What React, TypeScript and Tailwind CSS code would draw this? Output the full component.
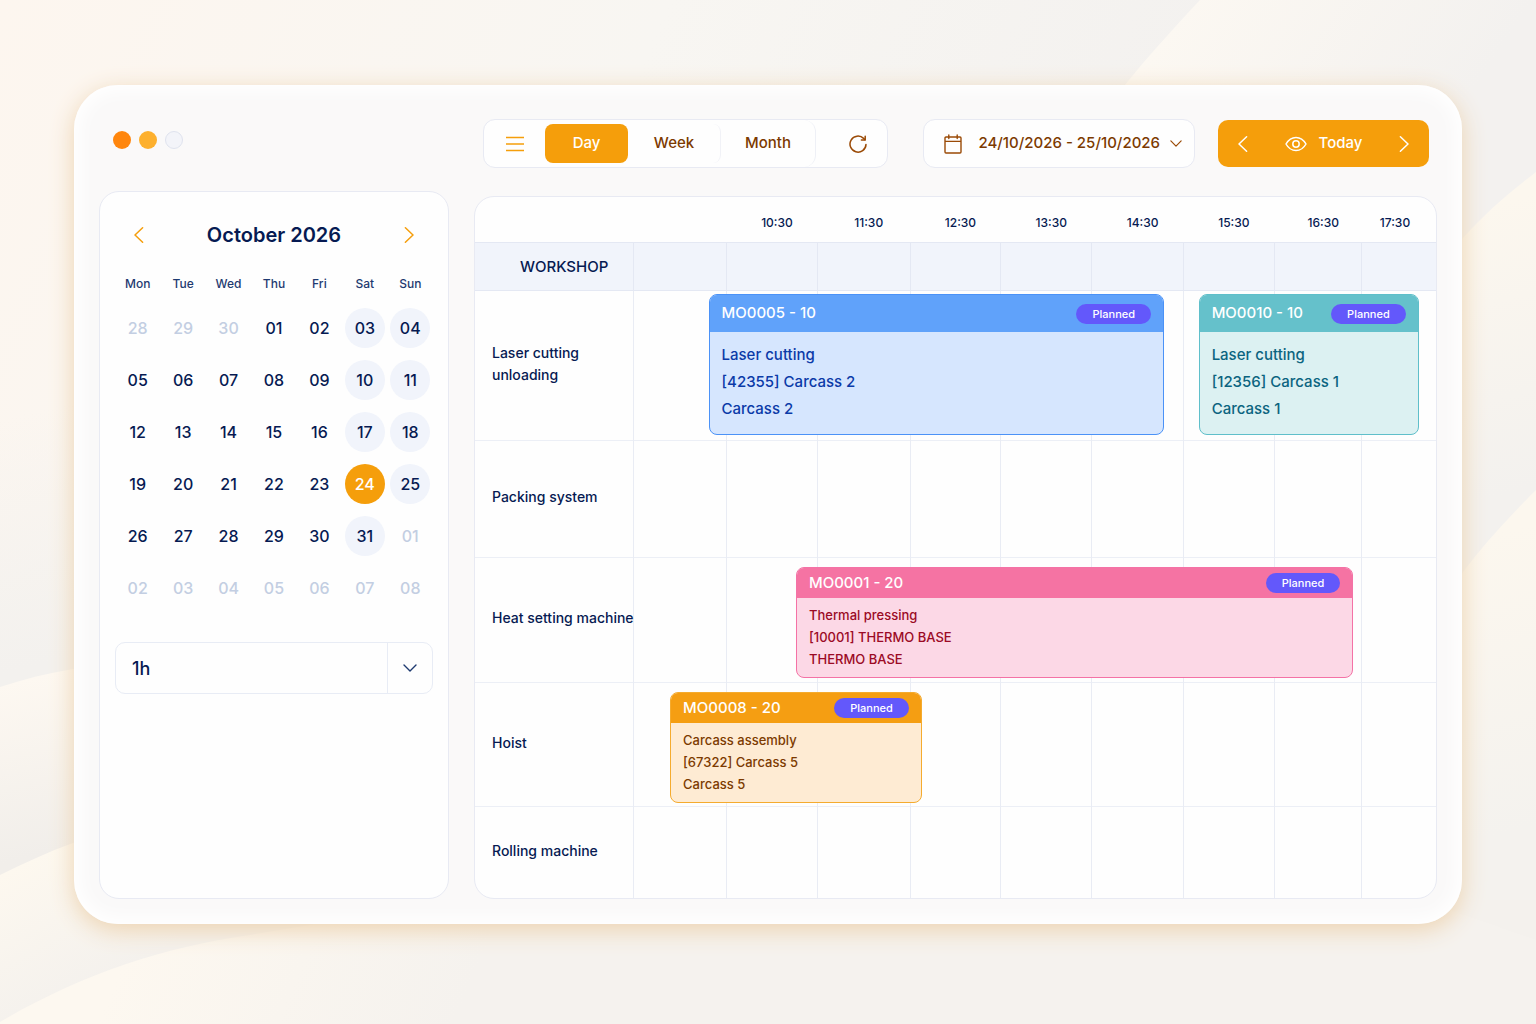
import React, { useState } from "react";

type IconProps = { className?: string };

const ChevronLeft = ({ className }: IconProps) => (
  <svg viewBox="0 0 10 16" fill="none" stroke="currentColor" strokeLinecap="round" strokeLinejoin="round" className={className} aria-hidden="true">
    <path d="M8.6 0.8 1 8l7.6 7.2" strokeWidth="1.5" />
  </svg>
);

const ChevronRight = ({ className }: IconProps) => (
  <svg viewBox="0 0 10 16" fill="none" stroke="currentColor" strokeLinecap="round" strokeLinejoin="round" className={className} aria-hidden="true">
    <path d="M1.4 0.8 9 8l-7.6 7.2" strokeWidth="1.5" />
  </svg>
);

const ChevronDown = ({ className }: IconProps) => (
  <svg viewBox="0 0 14 8" fill="none" stroke="currentColor" strokeLinecap="round" strokeLinejoin="round" className={className} aria-hidden="true">
    <path d="M1 1l6 6 6-6" strokeWidth="1.4" />
  </svg>
);

const MenuIcon = ({ className }: IconProps) => (
  <svg viewBox="0 0 18 16" fill="none" stroke="currentColor" className={className} aria-hidden="true">
    <path d="M0 1.5h18M0 8h18M0 14.5h18" strokeWidth="1.5" />
  </svg>
);

const RefreshIcon = ({ className }: IconProps) => (
  <svg viewBox="0 0 18 18" fill="none" stroke="currentColor" strokeLinecap="round" strokeLinejoin="round" className={className} aria-hidden="true">
    <path d="M17 9.4A8 8 0 1 1 14.6 3.4L16 4.8" strokeWidth="1.5" />
    <path d="M16.2 1.2v3.8h-3.8" strokeWidth="1.5" />
  </svg>
);

const CalendarIcon = ({ className }: IconProps) => (
  <svg viewBox="0 0 18 20" fill="none" stroke="currentColor" strokeLinecap="round" strokeLinejoin="round" className={className} aria-hidden="true">
    <path d="M2 3h14a1 1 0 0 1 1 1v14a1 1 0 0 1-1 1H2a1 1 0 0 1-1-1V4a1 1 0 0 1 1-1ZM1 7.4h16M4.8 1v3.6M13.2 1v3.6" strokeWidth="1.4" />
  </svg>
);

const EyeIcon = ({ className }: IconProps) => (
  <svg viewBox="0 0 22 16" fill="none" stroke="currentColor" strokeLinejoin="round" className={className} aria-hidden="true">
    <path d="M1 8c2.4-4.2 6-6.6 10-6.6S18.6 3.8 21 8c-2.4 4.2-6 6.6-10 6.6S3.4 12.2 1 8Z" strokeWidth="1.5" />
    <circle cx="11" cy="8" r="3.2" strokeWidth="1.5" />
  </svg>
);

const weekdays = ["Mon", "Tue", "Wed", "Thu", "Fri", "Sat", "Sun"];

const weeks = [
  ["28", "29", "30", "01", "02", "03", "04"],
  ["05", "06", "07", "08", "09", "10", "11"],
  ["12", "13", "14", "15", "16", "17", "18"],
  ["19", "20", "21", "22", "23", "24", "25"],
  ["26", "27", "28", "29", "30", "31", "01"],
  ["02", "03", "04", "05", "06", "07", "08"],
];

const isOutside = (week: number, day: number) =>
  (week === 0 && day < 3) || (week === 4 && day === 6) || week === 5;

const dayClass = (week: number, day: number, selected: boolean) => {
  if (selected) return "bg-[#f59e0b] text-white";
  if (isOutside(week, day)) return "text-[#c3cee2]";
  if (day > 4) return "bg-[#f1f4fb] text-[#061a52]";
  return "text-[#061a52]";
};

const Calendar = () => {
  const [selected, setSelected] = useState("3-5");

  return (
    <aside className="flex-1 rounded-[20px] border border-[#e8eaf3] bg-[#fefefe] px-[15px] pt-[27px]">
      <div className="flex items-center justify-between px-4">
        <button aria-label="Previous month" className="flex h-8 w-4 items-center justify-center text-[#f59e0b]">
          <ChevronLeft className="h-4 w-[10px]" />
        </button>
        <h2 className="text-[20px] leading-8 font-semibold text-[#061a52]">October 2026</h2>
        <button aria-label="Next month" className="flex h-8 w-4 items-center justify-center text-[#f59e0b]">
          <ChevronRight className="h-4 w-[10px]" />
        </button>
      </div>

      <table className="mt-[15px] w-full table-fixed text-center">
        <thead>
          <tr className="h-9 text-[12px] text-[#1e3a70]">
            {weekdays.map((name) => (
              <th key={name} scope="col" className="font-medium">
                {name}
              </th>
            ))}
          </tr>
        </thead>
        <tbody>
          {weeks.map((week, w) => (
            <tr key={w} className="h-[52px]">
              {week.map((day, d) => (
                <td key={d} className="p-0">
                  <button
                    onClick={() => setSelected(`${w}-${d}`)}
                    className={`size-10 rounded-full align-middle text-[16px] font-medium ${dayClass(w, d, selected === `${w}-${d}`)}`}
                  >
                    {day}
                  </button>
                </td>
              ))}
            </tr>
          ))}
        </tbody>
      </table>

      <div className="relative mt-7">
        <select
          aria-label="Time step"
          className="h-[52px] w-full appearance-none rounded-[10px] border border-[#e8ecf5] bg-transparent px-4 text-[18px] font-medium text-[#061a52]"
        >
          <option>1h</option>
          <option>2h</option>
          <option>4h</option>
        </select>
        <span className="pointer-events-none absolute inset-y-px right-px flex w-[45px] items-center justify-center border-l border-[#e8ecf5] text-[#1e3a70]">
          <ChevronDown className="h-2 w-[14px]" />
        </span>
      </div>
    </aside>
  );
};

const Toolbar = () => {
  const [view, setView] = useState("Day");

  const tab = (name: string) =>
    view === name ? "bg-[#f59e0b] text-white" : "text-[#7c3a00]";

  return (
    <div className="flex items-center pr-2 pl-[9px] text-[15px] font-medium text-[#7c3a00]">
      <div className="flex h-[49px] items-center rounded-xl border border-[#e8eaf3] bg-[#fefefe]">
        <button aria-label="Menu" className="flex h-full w-[61px] items-center justify-center text-[#f59e0b]">
          <MenuIcon className="h-4 w-[18px]" />
        </button>
        <button onClick={() => setView("Day")} className={`h-[39px] w-[83px] rounded-lg ${tab("Day")}`}>
          Day
        </button>
        <div className="h-[39px] w-[93px] rounded-r-lg border-r border-[#f1f2f7]">
          <button onClick={() => setView("Week")} className={`size-full rounded-lg ${tab("Week")}`}>
            Week
          </button>
        </div>
        <div className="h-full w-[95px] rounded-r-xl border-r border-[#eef0f6]">
          <button onClick={() => setView("Month")} className={`size-full rounded-lg ${tab("Month")}`}>
            Month
          </button>
        </div>
        <button aria-label="Refresh" className="flex h-full w-[71px] items-center justify-center pl-3 text-[#9a4a06]">
          <RefreshIcon className="size-[18px]" />
        </button>
      </div>

      <button className="ml-auto flex h-[49px] items-center rounded-xl border border-[#e8eaf3] bg-[#fefefe] pr-3 pl-5">
        <CalendarIcon className="h-5 w-[18px] text-[#9a4a06]" />
        <span className="mr-[10px] ml-4">24/10/2026 - 25/10/2026</span>
        <ChevronDown className="h-[7px] w-3 text-[#9a4a06]" />
      </button>

      <div className="ml-[23px] flex h-[47px] w-[211px] items-center justify-between rounded-[10px] bg-[#f59e0b] px-5 text-white">
        <button aria-label="Previous day">
          <ChevronLeft className="h-4 w-[10px]" />
        </button>
        <button className="flex items-center gap-3">
          <EyeIcon className="h-4 w-[22px]" />
          Today
        </button>
        <button aria-label="Next day">
          <ChevronRight className="h-4 w-[10px]" />
        </button>
      </div>
    </div>
  );
};

type Order = {
  code: string;
  lines: string[];
  // position on the row, in percent of the table width
  left: number;
  width: number;
  compact?: boolean;
  box: string;
  head: string;
};

const columns = [
  "w-[9.7%]",
  "w-[9.4%]",
  "w-[9.7%]",
  "w-[9.4%]",
  "w-[9.5%]",
  "w-[9.5%]",
  "w-[9.5%]",
  "w-[9.1%]",
  "w-[7.7%]",
];

const hours = ["", "10:30", "11:30", "12:30", "13:30", "14:30", "15:30", "16:30", "17:30"];

const rows: { name: string; height: string; orders: Order[] }[] = [
  {
    name: "Laser cutting\nunloading",
    height: "h-[150px]",
    orders: [
      {
        code: "MO0005 - 10",
        lines: ["Laser cutting", "[42355] Carcass 2", "Carcass 2"],
        left: 24.3,
        width: 47.4,
        box: "border-[#4b92f7] bg-[#d6e6fe] text-[#0b3aa8]",
        head: "bg-[#60a2fa]",
      },
      {
        code: "MO0010 - 10",
        lines: ["Laser cutting", "[12356] Carcass 1", "Carcass 1"],
        left: 75.3,
        width: 22.9,
        box: "border-[#5fbfca] bg-[#dcf1f2] text-[#0b6480]",
        head: "bg-[#65c1cb]",
      },
    ],
  },
  { name: "Packing system", height: "h-[117px]", orders: [] },
  {
    name: "Heat setting machine",
    height: "h-[125px]",
    orders: [
      {
        code: "MO0001 - 20",
        lines: ["Thermal pressing", "[10001] THERMO BASE", "THERMO BASE"],
        left: 33.4,
        width: 58,
        compact: true,
        box: "border-[#f472a6] bg-[#fcd8e6] text-[#9b0a25]",
        head: "bg-[#f573a3]",
      },
    ],
  },
  {
    name: "Hoist",
    height: "h-[124px]",
    orders: [
      {
        code: "MO0008 - 20",
        lines: ["Carcass assembly", "[67322] Carcass 5", "Carcass 5"],
        left: 20.3,
        width: 26.2,
        compact: true,
        box: "border-[#f5ab2e] bg-[#feebd3] text-[#7c3a00]",
        head: "bg-[#f59e12]",
      },
    ],
  },
  { name: "Rolling machine", height: "h-[92px]", orders: [] },
];

const OrderCard = ({ order }: { order: Order }) => (
  <article
    style={{ left: `${order.left}%`, width: `${order.width}%` }}
    className={`absolute overflow-hidden rounded-lg border font-medium ${order.compact ? "top-[10px]" : "top-1"} ${order.box}`}
  >
    <header className={`flex items-center justify-between px-3 text-[15px] text-white ${order.compact ? "h-[30px]" : "h-[37px]"} ${order.head}`}>
      <span>{order.code}</span>
      <span className="rounded-full bg-[#6358fb] px-4 text-[11px] leading-5">Planned</span>
    </header>
    <div className={order.compact ? "px-3 pt-[6px] pb-[7px] text-[13px] leading-[22px]" : "px-3 pt-[9px] pb-3 text-[15px] leading-[27px]"}>
      {order.lines.map((line) => (
        <p key={line}>{line}</p>
      ))}
    </div>
  </article>
);

const Scheduler = () => (
  <div className="overflow-hidden rounded-[20px] border border-[#e8eaf3] bg-[#fefefe]">
    <table className="w-full table-fixed text-left text-[#061a52]">
      <colgroup>
        <col className="w-[16.5%]" />
        {columns.map((width, i) => (
          <col key={i} className={width} />
        ))}
      </colgroup>
      <thead>
        <tr className="h-[45px] text-[12px]">
          <td />
          {hours.map((hour, i) => (
            <th key={i} scope="col" className={`pt-[7px] text-center font-medium ${i === 8 ? "pr-2" : "pl-[10px]"}`}>
              {hour}
            </th>
          ))}
        </tr>
        <tr className="h-12 border-y border-[#e4e8f3] bg-[#f1f4fb]">
          <th scope="col" className="pt-[3px] pl-[45px] text-[15px] font-medium">
            WORKSHOP
          </th>
          {hours.map((_, i) => (
            <td key={i} className="border-l border-[#e4e8f3]" />
          ))}
        </tr>
      </thead>
      <tbody>
        {rows.map((row) => (
          <tr key={row.name} className={`relative border-b border-[#eceff6] last:border-b-0 ${row.height}`}>
            <th scope="row" className="pr-0 pb-[3px] pl-[17px] text-[14px] leading-[22px] font-medium whitespace-pre">
              {row.name}
            </th>
            {hours.map((_, i) => (
              <td key={i} className="border-l border-[#e9ecf4] p-0">
                {i === 0 && row.orders.map((order) => <OrderCard key={order.code} order={order} />)}
              </td>
            ))}
          </tr>
        ))}
      </tbody>
    </table>
  </div>
);

const Backdrop = () => (
  <svg viewBox="0 0 1536 1024" preserveAspectRatio="none" className="absolute inset-0 -z-10 size-full" aria-hidden="true">
    <defs>
      <linearGradient id="base" x1="0" y1="0" x2="1" y2="0.3">
        <stop offset="0" stopColor="#fdf6ef" />
        <stop offset="0.4" stopColor="#f8f6f2" />
        <stop offset="0.75" stopColor="#f3f1ef" />
      </linearGradient>
      <linearGradient id="left" gradientUnits="userSpaceOnUse" x1="0" y1="420" x2="60" y2="660">
        <stop offset="0" stopColor="#f3f1ee" stopOpacity="0" />
        <stop offset="1" stopColor="#f3f1ee" />
      </linearGradient>
      <linearGradient id="topRight" gradientUnits="userSpaceOnUse" x1="1160" y1="40" x2="1400" y2="200">
        <stop offset="0" stopColor="#fcf8f2" />
        <stop offset="1" stopColor="#f3f1ef" />
      </linearGradient>
      <linearGradient id="right" gradientUnits="userSpaceOnUse" x1="1490" y1="205" x2="1560" y2="480">
        <stop offset="0" stopColor="#fcf7ee" />
        <stop offset="1" stopColor="#f3f1ee" />
      </linearGradient>
      <linearGradient id="lowRight" gradientUnits="userSpaceOnUse" x1="1490" y1="535" x2="1560" y2="820">
        <stop offset="0" stopColor="#fcf7ee" />
        <stop offset="1" stopColor="#f4f2ee" />
      </linearGradient>
      <linearGradient id="leftWave" gradientUnits="userSpaceOnUse" x1="20" y1="680" x2="60" y2="850">
        <stop offset="0" stopColor="#fdf8f1" />
        <stop offset="1" stopColor="#f1eeea" />
      </linearGradient>
      <linearGradient id="lowLeft" gradientUnits="userSpaceOnUse" x1="20" y1="865" x2="90" y2="990">
        <stop offset="0" stopColor="#fdf8ef" />
        <stop offset="1" stopColor="#f4f1ed" />
      </linearGradient>
      <linearGradient id="bottom" gradientUnits="userSpaceOnUse" x1="120" y1="970" x2="420" y2="1100">
        <stop offset="0" stopColor="#fdf8f0" />
        <stop offset="1" stopColor="#f5f2ee" />
      </linearGradient>
    </defs>
    <rect width="1536" height="1024" fill="url(#base)" />
    <path d="M0 400h200v300H0Z" fill="url(#left)" />
    <path d="M1200 0C1170 32 1145 60 1124 86V500H1536V0Z" fill="url(#topRight)" />
    <path d="M1536 172C1510 192 1485 213 1463 238L1400 320V900H1536Z" fill="url(#right)" />
    <path d="M1536 490C1508 518 1484 544 1463 572L1400 680V900L1300 1024H1536Z" fill="url(#lowRight)" />
    <path d="M0 687C24 679 48 673 73 669H200V900H0Z" fill="url(#leftWave)" />
    <path d="M0 875C24 863 48 852 73 843L200 800V900H1536V1024H0Z" fill="url(#lowLeft)" />
    <path d="M0 1022C80 975 160 948 250 935L400 910H1450L1536 940V1024H0Z" fill="url(#bottom)" />
  </svg>
);

const App = () => {
  return (
    <main className="relative isolate flex min-h-screen flex-col overflow-hidden px-[74px] pt-[85px] pb-[100px] font-[Inter,sans-serif]">
      <Backdrop />
      <div className="grid grid-cols-[350px_1fr] gap-x-[25px] rounded-[44px] bg-[#faf9f9] px-[25px] pb-[25px] shadow-[inset_0_0_18px_6px_#ffffff,0_6px_24px_#edd3b0]">
        <div className="flex flex-col">
          <div className="flex h-[106px] gap-2 pt-[46px] pl-[14px]">
            <span className="size-[18px] rounded-full bg-[#ff860d]" />
            <span className="size-[18px] rounded-full bg-[#fdb02e]" />
            <span className="size-[18px] rounded-full border border-[#dfe3ee] bg-[#f3f4f9]" />
          </div>
          <Calendar />
        </div>
        <div className="flex min-w-0 flex-col gap-7 pt-[34px]">
          <Toolbar />
          <Scheduler />
        </div>
      </div>
    </main>
  );
};

export default App;
